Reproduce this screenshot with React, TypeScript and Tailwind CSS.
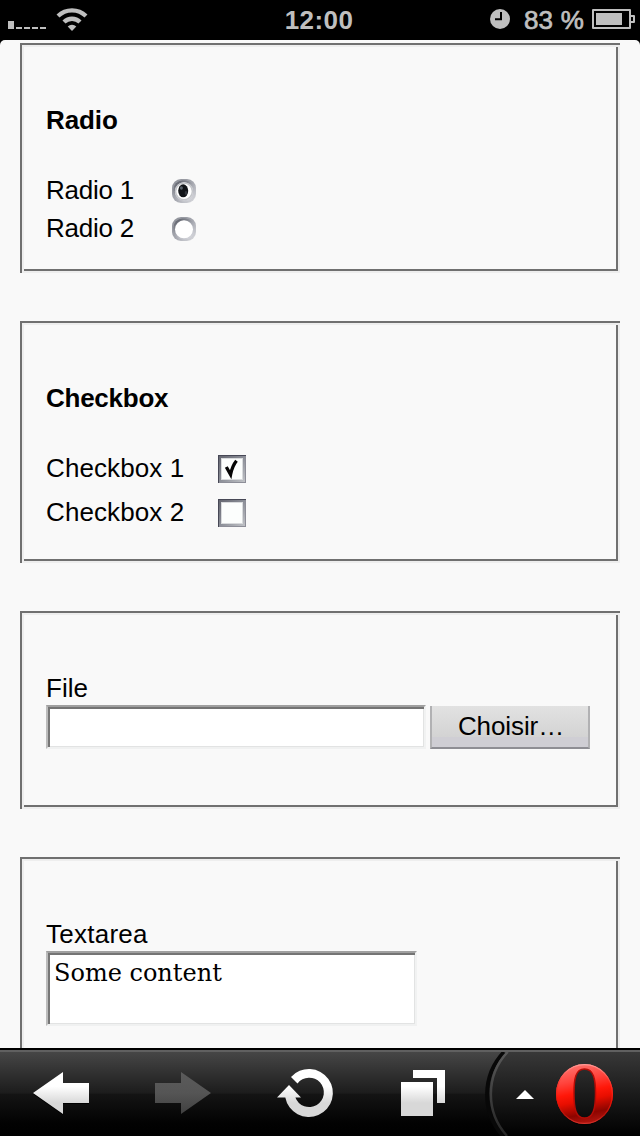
import type { ReactNode } from "react";

function Fieldset({ className, children }: { className: string; children: ReactNode }) {
  return (
    <section
      className={`mx-5 shrink-0 p-[2px] shadow-[inset_0_2px_#707070,inset_2px_0_#707070,inset_-2px_0_#eeeeee,inset_0_-2px_#eeeeee] ${className}`}
    >
      <div className="h-full px-6 shadow-[inset_0_2px_#eeeeee,inset_2px_0_#eeeeee,inset_-2px_0_#707070,inset_0_-2px_#707070]">
        {children}
      </div>
    </section>
  );
}

function StatusBar() {
  return (
    <header className="grid h-10 shrink-0 grid-cols-[1fr_auto_1fr] bg-black font-bold text-[#bfbfbf]">
      <div className="flex">
        <svg width="100" height="40" fill="#bfbfbf">
          <path d="M8 21h6v8H8zM16 27h6v2h-6zM24 27h6v2h-6zM32 27h6v2h-6zM40 27h6v2h-6z" />
          <path d="M72 31l-4.300-4.500a6.200 6.200 0 0 1 8.600 0z" />
          <path d="M64 22a11.500 11.500 0 0 1 16 0" fill="none" stroke="#bfbfbf" strokeWidth="4.400" />
          <path d="M58 16a20 20 0 0 1 28 0" fill="none" stroke="#bfbfbf" strokeWidth="4.200" />
        </svg>
      </div>
      <div className="mr-[2px] pt-[5px] text-[26px] leading-[30px] tracking-[0.4px]">12:00</div>
      <div className="flex justify-end pr-[2px]">
        <svg width="22" height="40" className="mr-[13px]">
          <circle cx="11" cy="19" r="10" fill="#bfbfbf" />
          <path d="M12 12v7.200H6" fill="none" stroke="#000" strokeWidth="2" />
        </svg>
        <div className="pt-[5px] text-[26px] font-normal leading-[30px] tracking-[0.2px] [-webkit-text-stroke:0.7px_#bfbfbf]">
          83 %
        </div>
        <svg width="48" height="40" className="ml-[6px]">
          <path
            d="M3 10h37v18H3zM41 16h3v6h-3"
            fill="none"
            stroke="#bfbfbf"
            strokeWidth="2"
            strokeLinejoin="round"
          />
          <path d="M6 13h26v12H6z" fill="#bfbfbf" />
        </svg>
      </div>
    </header>
  );
}

function RadioMark({ checked }: { checked?: boolean }) {
  return (
    <svg width="24" height="24" viewBox="0 0 24 24">
      <rect width="24" height="24" rx="9" fill="url(#radioRim)" />
      <rect x="1.500" y="1.500" width="21" height="21" rx="9" fill="url(#radioRim2)" />
      <circle cx="12" cy="12.300" r="9" fill="#fff" />
      {checked && (
        <>
          <circle cx="12" cy="12.300" r="8.400" fill="none" stroke="#c4c6ca" strokeWidth="1.500" />
          <ellipse cx="11.200" cy="11.800" rx="5" ry="6.500" fill="#111418" />
          <ellipse cx="9.400" cy="9" rx="1.500" ry="1.800" fill="#59616a" />
          <ellipse cx="14" cy="14" rx="1.300" ry="2" fill="#31353b" />
        </>
      )}
    </svg>
  );
}

function CheckMark({ checked }: { checked?: boolean }) {
  return (
    <svg width="28" height="28" viewBox="0 0 28 28">
      <rect width="28" height="28" fill="url(#checkRim)" />
      <path d="M0 0H28V1H1V28H0z" fill="#474856" />
      <path d="M27 1h1v27H1v-1h26z" fill="#8d8e98" />
      <rect x="3" y="3" width="22" height="22" fill="#d9dbdd" />
      <rect x="4" y="4" width="20" height="20" fill="#fcfefd" />
      {checked && (
        <path
          d="M8.300 12L12.600 19.500C13.500 15 15.500 9.500 18.500 5.800"
          fill="none"
          stroke="#050505"
          strokeWidth="3.300"
        />
      )}
    </svg>
  );
}

const field =
  "border-2 border-t-[#a0a0a0] border-l-[#bcbcbc] border-r-[#f1f2f2] border-b-[#f0f1f1] bg-white shadow-[inset_0_2px_#747474,inset_2px_0_#777777,inset_-1px_0_#e2e3e3,inset_0_-1px_#e2e3e3]";

function Toolbar() {
  return (
    <nav className="h-[88px] shrink-0 bg-black">
      <svg width="640" height="88" viewBox="0 1048 640 88">
        <defs>
          <linearGradient id="bar" x1="0" y1="1052" x2="0" y2="1136" gradientUnits="userSpaceOnUse">
            <stop offset="0" stopColor="#464646" />
            <stop offset="0.49" stopColor="#1c1c1c" />
            <stop offset="0.5" stopColor="#141414" />
            <stop offset="0.85" stopColor="#020202" />
            <stop offset="1" stopColor="#000" />
          </linearGradient>
          <linearGradient id="corner" x1="0" y1="1052" x2="0" y2="1136" gradientUnits="userSpaceOnUse">
            <stop offset="0" stopColor="#383838" />
            <stop offset="0.5" stopColor="#1b1b1b" />
            <stop offset="1" stopColor="#000" />
          </linearGradient>
          <linearGradient id="icon" x1="0" y1="1070" x2="0" y2="1117" gradientUnits="userSpaceOnUse">
            <stop offset="0.35" stopColor="#fff" />
            <stop offset="0.7" stopColor="#d8d8d8" />
          </linearGradient>
          <linearGradient id="dim" x1="0" y1="1072" x2="0" y2="1114" gradientUnits="userSpaceOnUse">
            <stop offset="0" stopColor="#5b5b5b" />
            <stop offset="0.5" stopColor="#555" />
            <stop offset="1" stopColor="#404040" />
          </linearGradient>
          <linearGradient id="rim" x1="0" y1="1052" x2="0" y2="1136" gradientUnits="userSpaceOnUse">
            <stop offset="0" stopColor="#5a5a5a" />
            <stop offset="1" stopColor="#242424" />
          </linearGradient>
          <linearGradient id="red" x1="0.3" y1="0" x2="0.5" y2="1">
            <stop offset="0" stopColor="#ff7570" />
            <stop offset="0.28" stopColor="#ff433c" />
            <stop offset="0.48" stopColor="#ff1709" />
            <stop offset="0.62" stopColor="#e80e00" />
            <stop offset="0.84" stopColor="#8d0500" />
            <stop offset="1" stopColor="#b0150f" />
          </linearGradient>
          <linearGradient id="redEdge" x1="0" y1="0" x2="0" y2="1">
            <stop offset="0" stopColor="#ff9a96" />
            <stop offset="0.3" stopColor="#fa3a31" />
            <stop offset="0.6" stopColor="#ee1408" />
            <stop offset="0.85" stopColor="#b8130b" />
            <stop offset="1" stopColor="#d3322a" />
          </linearGradient>
        </defs>
        <path d="M0 1052H640V1136H0z" fill="url(#bar)" />
        <path d="M509 1052A61 61 0 0 0 508 1136H640V1052z" fill="url(#corner)" />
        <path d="M504 1052A62 62 0 0 0 503 1136" fill="none" stroke="#080808" strokeWidth="4" />
        <path d="M507.500 1052A62 62 0 0 0 507 1136" fill="none" stroke="url(#rim)" strokeWidth="2.500" />
        <path d="M0 1050H640V1052H0z" fill="#606060" />

        <path d="M33 1094l30-21v11h26v20H63v11z" fill="#000" />
        <path d="M33 1093l30-21v11h26v20H63v11z" fill="url(#icon)" />
        <path d="M211 1093l-30-21v11h-26v20h26v11z" fill="url(#dim)" />

        <path
          d="M291 1077A24 24 0 1 1 285.300 1097.500h-8.300l12-12.500 12 12.500h-5.600A14.700 14.700 0 1 0 297.500 1083.500z"
          fill="url(#icon)"
        />
        <path d="M401 1082h32v34h-32z" fill="url(#icon)" />
        <path d="M413 1070h32v33h-8v-25h-24z" fill="url(#icon)" />
        <path d="M516 1099l9-9 9 9z" fill="#fff" />

        <ellipse cx="584.500" cy="1096" rx="27" ry="29.500" fill="#000" opacity=".55" />
        <ellipse cx="584.500" cy="1094" rx="28.500" ry="30" fill="url(#red)" />
        <ellipse cx="584.500" cy="1094" rx="27.900" ry="29.400" fill="none" stroke="url(#redEdge)" strokeWidth="1.200" />
        <path
          d="M584.500 1069C575.500 1069 574 1079 574 1093.500S575.500 1118 584.500 1118 595.500 1108 595.500 1093.500 593.500 1069 584.500 1069z"
          fill="url(#corner)"
          stroke="#b50c06"
          strokeWidth="1.500"
        />
      </svg>
    </nav>
  );
}

export default function App() {
  return (
    <div className="flex h-[1136px] w-[640px] flex-col overflow-hidden bg-black font-['Liberation_Sans',Arial,sans-serif] text-[26px] leading-[30px] text-black">
      <svg width="0" height="0" className="absolute">
        <defs>
          <linearGradient id="radioRim" x1="0" y1="0" x2="1" y2="1">
            <stop offset="0" stopColor="#8b8e96" />
            <stop offset="0.5" stopColor="#a5a7af" />
            <stop offset="1" stopColor="#dedfe3" />
          </linearGradient>
          <linearGradient id="radioRim2" x1="0.1" y1="0" x2="0.8" y2="1">
            <stop offset="0" stopColor="#555862" />
            <stop offset="0.5" stopColor="#a5a7af" />
            <stop offset="1" stopColor="#d8d9df" />
          </linearGradient>
          <linearGradient id="checkRim" x1="0" y1="0" x2="1" y2="1">
            <stop offset="0" stopColor="#61636d" />
            <stop offset="0.5" stopColor="#8b8e97" />
            <stop offset="1" stopColor="#c5c7cb" />
          </linearGradient>
        </defs>
      </svg>
      <StatusBar />
      <main className="flex min-h-0 flex-1 flex-col gap-12 overflow-hidden rounded-t-[5px] bg-[#f9f9f9] pt-[3px]">
        <Fieldset className="h-[230px]">
          <h2 className="pt-[60px] font-bold tracking-[-0.1px]">Radio</h2>
          <div className="mt-10 flex h-[38px] items-start">
            <span className="w-[126px] tracking-[-0.25px]">Radio 1</span>
            <span className="pt-1">
              <RadioMark checked />
            </span>
          </div>
          <div className="flex h-[38px] items-start">
            <span className="w-[126px] tracking-[-0.25px]">Radio 2</span>
            <span className="pt-1">
              <RadioMark />
            </span>
          </div>
        </Fieldset>
        <Fieldset className="h-[242px]">
          <h2 className="pt-[60px] font-bold tracking-[-0.25px]">Checkbox</h2>
          <div className="mt-10 flex h-11 items-start">
            <span className="w-[172px] tracking-[0.1px]">Checkbox 1</span>
            <span className="pt-[2px]">
              <CheckMark checked />
            </span>
          </div>
          <div className="flex h-11 items-start">
            <span className="w-[172px] tracking-[0.1px]">Checkbox 2</span>
            <span className="pt-[2px]">
              <CheckMark />
            </span>
          </div>
        </Fieldset>
        <Fieldset className="h-[198px]">
          <div className="pt-[60px]">File</div>
          <div className="mt-[2px] flex">
            <div className={`h-11 w-[380px] ${field}`} />
            <button className="ml-1 mt-px flex h-[43px] w-[160px] items-start justify-center border-x-2 border-b-2 border-x-[#b1b1b3] border-b-[#8e8e94] bg-linear-to-b from-[#e2e2e2] from-0% via-[#d3d3d3] via-75% to-[#cfced4] to-76% pl-[2px] pt-[5px] tracking-[-0.1px]">
              Choisir…
            </button>
          </div>
        </Fieldset>
        <Fieldset className="h-[230px]">
          <div className="pt-[60px] tracking-[0.25px]">Textarea</div>
          <div
            className={`mt-[2px] h-[75px] w-[371px] pl-[6px] pt-[6px] font-['DejaVu_Serif',serif] text-[24px] leading-[28px] ${field}`}
          >
            Some content
          </div>
        </Fieldset>
      </main>
      <Toolbar />
    </div>
  );
}
